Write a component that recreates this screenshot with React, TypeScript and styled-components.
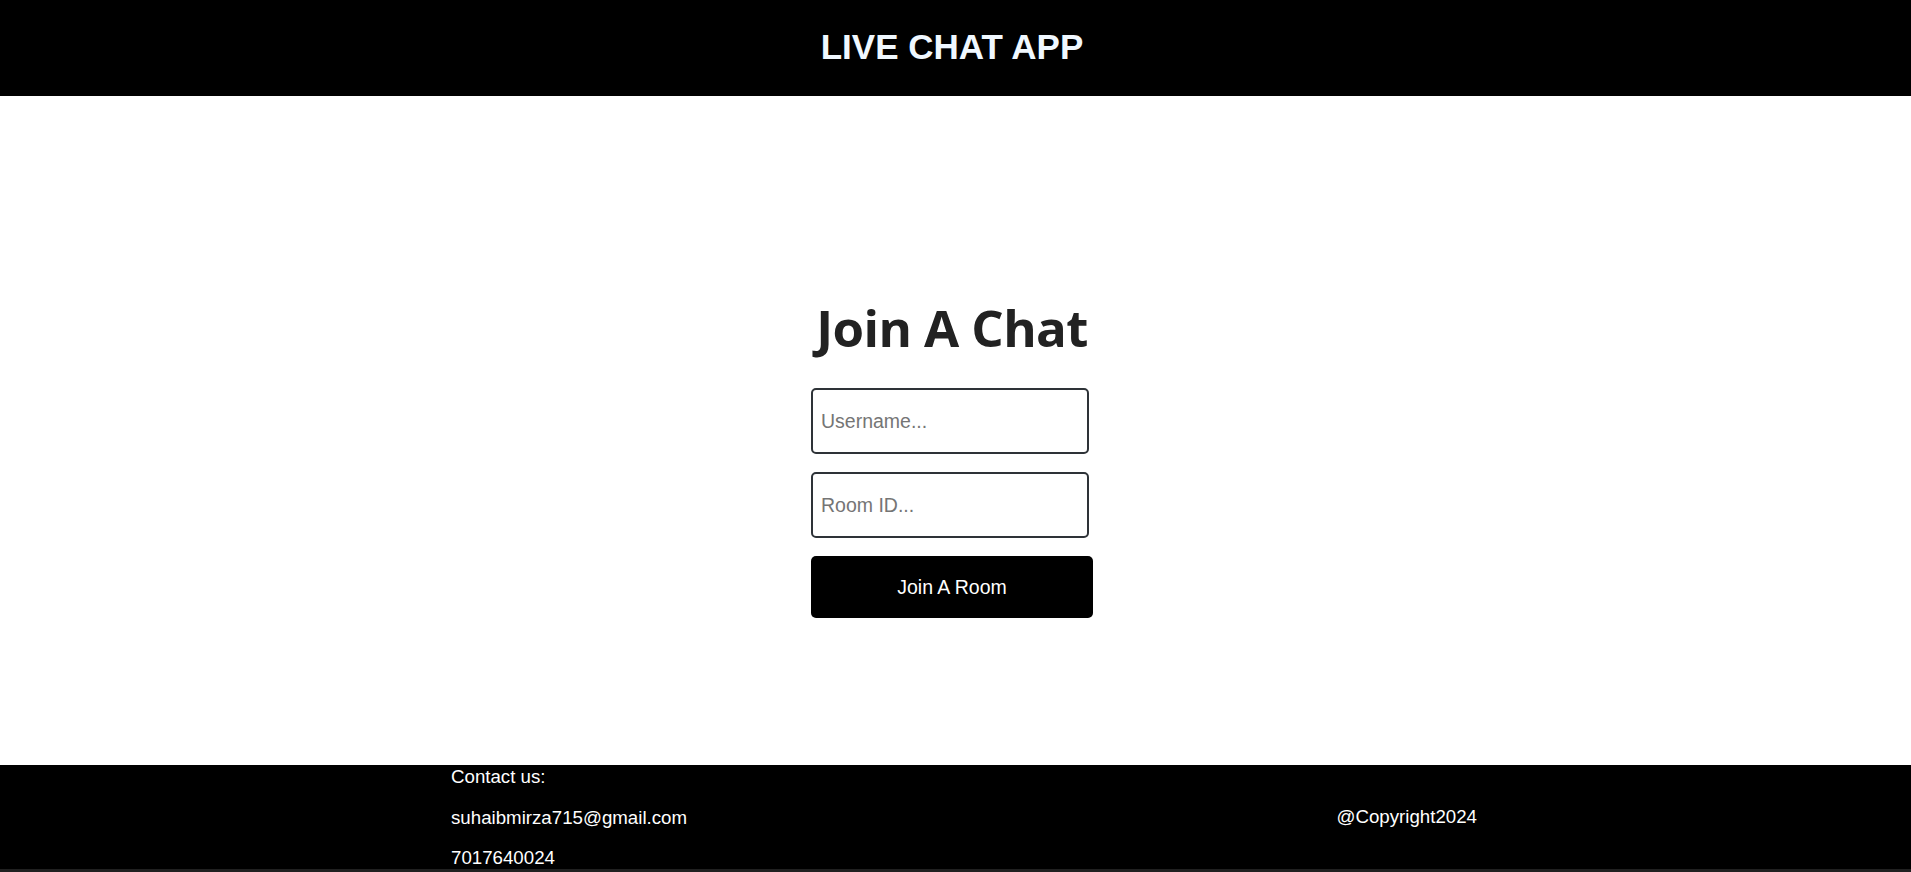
import React from "react";
import styled, { createGlobalStyle } from "styled-components";

const Global = createGlobalStyle`
  html, body { margin: 0; padding: 0; background: #202020; }
  body { font-family: "Liberation Sans", Arial, sans-serif; }
  * { box-sizing: border-box; }
`;

const Page = styled.div`
  display: flex;
  flex-direction: column;
  min-height: 869px;
  background: #ffffff;
`;

const Header = styled.header`
  height: 96px;
  background: #000;
  display: flex;
  align-items: center;
  justify-content: center;
  padding-right: 7px;
`;

const Title = styled.h1`
  margin: 0;
  font-family: "Liberation Sans", Arial, sans-serif;
  font-weight: 700;
  font-size: 35px;
  color: #f0f8ff;
  padding-bottom: 2px;
`;

const Main = styled.main`
  height: 669px;
  display: flex;
  justify-content: center;
  padding-top: 194px;
  padding-right: 7px;
`;

const Form = styled.div`
  width: 282px;
  display: flex;
  flex-direction: column;
  align-items: flex-start;
`;

const Heading = styled.h3`
  align-self: center;
  margin: 0 0 24px 0;
  font-family: "Open Sans", sans-serif;
  font-weight: 700;
  font-size: 51px;
  letter-spacing: -0.6px;
  line-height: 74px;
  color: #222222;
  white-space: nowrap;
`;

const Input = styled.input`
  width: 278px;
  height: 66px;
  margin-bottom: 18px;
  border: 2px solid #2e3338;
  border-radius: 5px;
  padding: 0 8px;
  font-family: "Liberation Sans", Arial, sans-serif;
  font-size: 19.5px;
  color: #222;
  outline: none;
  &::placeholder { color: #757575; }
`;

const Button = styled.button`
  width: 282px;
  height: 62px;
  border: none;
  border-radius: 5px;
  background: #000;
  color: #fff;
  font-family: "Liberation Sans", Arial, sans-serif;
  font-size: 19.5px;
  cursor: pointer;
`;

const Footer = styled.footer`
  height: 104px;
  background: #000;
  color: #fff;
  display: flex;
  justify-content: space-between;
  align-items: center;
  padding: 0 434px 0 451px;
  font-family: "Liberation Sans", Arial, sans-serif;
  font-size: 18.7px;
`;

const Contact = styled.div`
  display: flex;
  flex-direction: column;
  gap: 19px;
  align-self: flex-start;
  padding-top: 1px;
`;

const Line = styled.p`
  margin: 0;
  line-height: 21.5px;
`;

export default function App() {
  return (
    <>
      <Global />
      <Page>
        <Header>
          <Title>LIVE CHAT APP</Title>
        </Header>
        <Main>
          <Form>
            <Heading>Join A Chat</Heading>
            <Input placeholder="Username..." />
            <Input placeholder="Room ID..." />
            <Button>Join A Room</Button>
          </Form>
        </Main>
        <Footer>
          <Contact>
            <Line>Contact us:</Line>
            <Line>suhaibmirza715@gmail.com</Line>
            <Line>7017640024</Line>
          </Contact>
          <Line>@Copyright2024</Line>
        </Footer>
      </Page>
    </>
  );
}
